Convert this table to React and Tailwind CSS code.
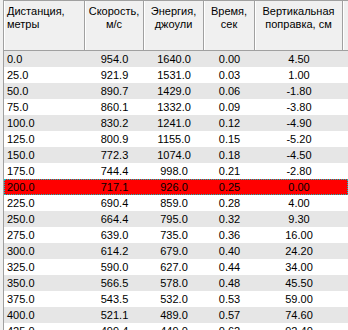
import React from "react";

const rows = [
  ["0.0", "954.0", "1640.0", "0.00", "4.50"],
  ["25.0", "921.9", "1531.0", "0.03", "1.00"],
  ["50.0", "890.7", "1429.0", "0.06", "-1.80"],
  ["75.0", "860.1", "1332.0", "0.09", "-3.80"],
  ["100.0", "830.2", "1241.0", "0.12", "-4.90"],
  ["125.0", "800.9", "1155.0", "0.15", "-5.20"],
  ["150.0", "772.3", "1074.0", "0.18", "-4.50"],
  ["175.0", "744.4", "998.0", "0.21", "-2.80"],
  ["200.0", "717.1", "926.0", "0.25", "0.00"],
  ["225.0", "690.4", "859.0", "0.28", "4.00"],
  ["250.0", "664.4", "795.0", "0.32", "9.30"],
  ["275.0", "639.0", "735.0", "0.36", "16.00"],
  ["300.0", "614.2", "679.0", "0.40", "24.20"],
  ["325.0", "590.0", "627.0", "0.44", "34.00"],
  ["350.0", "566.5", "578.0", "0.48", "45.50"],
  ["375.0", "543.5", "532.0", "0.53", "59.00"],
  ["400.0", "521.1", "489.0", "0.57", "74.60"],
  ["425.0", "499.4", "449.0", "0.62", "92.40"],
];

const widths = ["w-[81px]", "w-[59px]", "w-[60px]", "w-[51px]", "w-[88px]"];

function HeaderCell({ w, align, children }) {
  return (
    <div
      className={`${w} shrink-0 h-full border-r border-[#a0a0a0] shadow-[inset_1px_0_0_#ffffff] pt-[4px] leading-[13px] ${align}`}
    >
      {children}
    </div>
  );
}

export default function App() {
  return (
    <div
      className="w-[348px] h-[330px] overflow-hidden bg-[#f0f0f0] flex text-[11px] text-black"
      style={{ fontFamily: '"Liberation Sans", Arial, sans-serif' }}
    >
      <div className="w-[3px] shrink-0 bg-[#f0f0f0]" />
      <div className="flex-1 flex flex-col border-l border-t border-[#a0a0a0] bg-white min-w-0">
        <div className="h-[50px] shrink-0 flex bg-[#f0f0f0] border-b border-[#a0a0a0]">
          <HeaderCell w={widths[0]} align="text-left pl-[3px]">
            Дистанция,
            <br />
            метры
          </HeaderCell>
          <HeaderCell w={widths[1]} align="text-center">
            Скорость,
            <br />
            м/с
          </HeaderCell>
          <HeaderCell w={widths[2]} align="text-center">
            Энергия,
            <br />
            джоули
          </HeaderCell>
          <HeaderCell w={widths[3]} align="text-center">
            Время,
            <br />
            сек
          </HeaderCell>
          <HeaderCell w={widths[4]} align="text-center">
            Вертикальная
            <br />
            поправка, см
          </HeaderCell>
          <div className="flex-1 shadow-[inset_1px_0_0_#ffffff]" />
        </div>
        <div className="flex flex-col">
          {rows.map((r, i) => {
            const selected = i === 8;
            const bg = selected
              ? "bg-[#ff0000] outline outline-1 outline-dotted outline-[#00c8c8] -outline-offset-1"
              : i % 2 === 0
              ? "bg-[#e6e6e6]"
              : "bg-white";
            return (
              <div key={i} className={`h-[16px] shrink-0 flex leading-[16px] ${bg}`}>
                <div className={`${widths[0]} shrink-0 pl-[3px]`}>{r[0]}</div>
                <div className={`${widths[1]} shrink-0 text-center`}>{r[1]}</div>
                <div className={`${widths[2]} shrink-0 text-center`}>{r[2]}</div>
                <div className={`${widths[3]} shrink-0 text-center`}>{r[3]}</div>
                <div className={`${widths[4]} shrink-0 text-center`}>{r[4]}</div>
                <div className="flex-1" />
              </div>
            );
          })}
        </div>
      </div>
    </div>
  );
}
